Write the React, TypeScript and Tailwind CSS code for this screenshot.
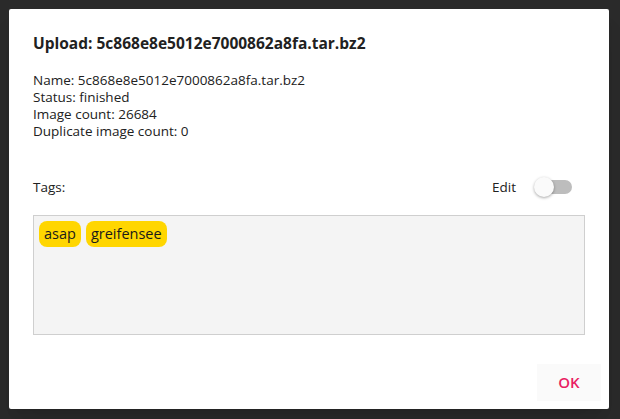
const tags = ["asap", "greifensee"];

const info = [
  "Name: 5c868e8e5012e7000862a8fa.tar.bz2",
  "Status: finished",
  "Image count: 26684",
  "Duplicate image count: 0",
];

const Toggle = () => (
  <div className="relative w-[38px] h-[24px] flex items-center mr-[13px]">
    <div className="ml-[3px] w-[35px] h-[14px] rounded-full bg-[#bdbdbd]" />
    <div className="absolute left-0 top-[2px] w-[20px] h-[20px] rounded-full bg-[#fafafa] shadow-[0_1px_3px_rgba(0,0,0,0.35)]" />
  </div>
);

export default function App() {
  return (
    <div className="w-[620px] h-[419px] bg-[#2a2a2a] pt-[9px] pl-[9px] overflow-hidden font-['Open_Sans',sans-serif] text-[#212121]">
      <div className="w-[600px] h-[400px] bg-white rounded-[2px] shadow-xl flex flex-col">
        <div className="px-6 pt-[22px] text-[15.5px] font-bold leading-[24px]">
          Upload: 5c868e8e5012e7000862a8fa.tar.bz2
        </div>
        <div className="px-6 mt-[17px] text-[13.5px] leading-[17px]">
          {info.map((line) => (
            <div key={line}>{line}</div>
          ))}
        </div>
        <div className="px-6 mt-[35px] flex items-center justify-between text-[13.5px] h-[24px]">
          <span>Tags:</span>
          <div className="flex items-center gap-[18px]">
            <span>Edit</span>
            <Toggle />
          </div>
        </div>
        <div className="mx-6 mt-[16px] h-[120px] border border-[#cfcfcf] bg-[#f4f4f4] p-[5px] flex items-start gap-[5px]">
          {tags.map((t) => (
            <span
              key={t}
              className="h-[26px] px-[5px] rounded-[8px] bg-[#ffd600] text-[14.5px] leading-[26px] text-[#1a1a1a]"
            >
              {t}
            </span>
          ))}
        </div>
        <div className="mt-auto flex justify-end p-2">
          <button className="w-[64px] h-[37px] bg-[#fafafa] text-[#e91e63] text-[15px] font-semibold">
            OK
          </button>
        </div>
      </div>
    </div>
  );
}
